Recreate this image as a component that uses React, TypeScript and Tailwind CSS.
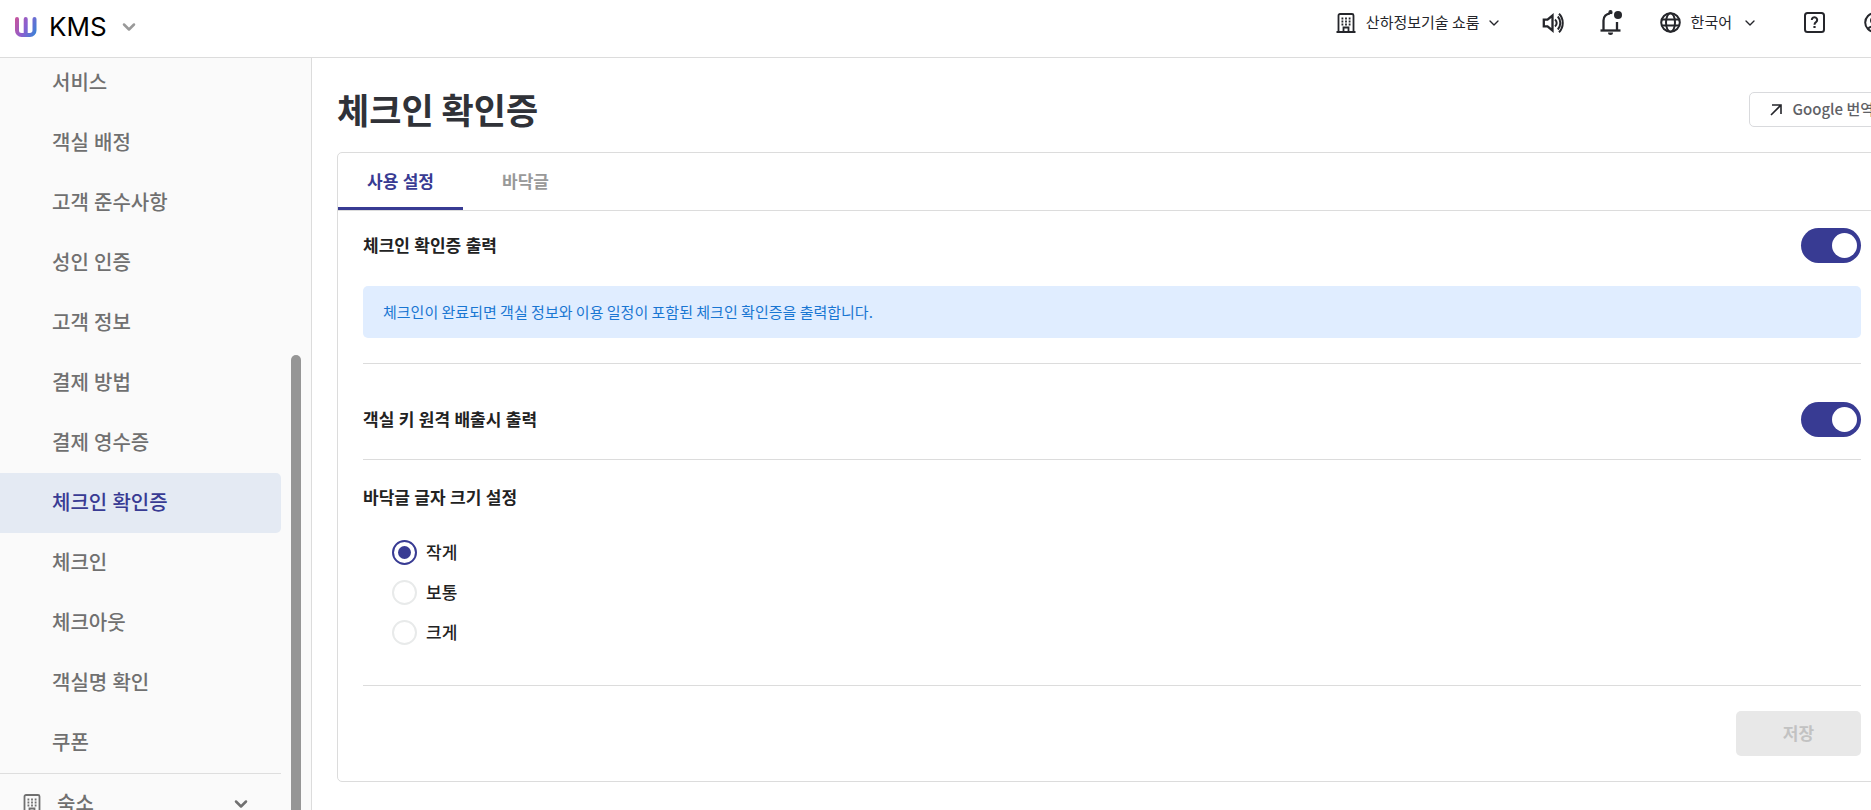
import { useState } from "react";
import type { ReactNode } from "react";
import { ChevronDown } from "lucide-react";

const MENU = [
  "서비스",
  "객실 배정",
  "고객 준수사항",
  "성인 인증",
  "고객 정보",
  "결제 방법",
  "결제 영수증",
  "체크인 확인증",
  "체크인",
  "체크아웃",
  "객실명 확인",
  "쿠폰",
];

const TABS = ["사용 설정", "바닥글"];
const SIZES = ["작게", "보통", "크게"];

function LogoMark() {
  return (
    <svg width="23" height="20" viewBox="0 0 23 20" fill="none" aria-hidden="true">
      <defs>
        <linearGradient id="mark" x1="0" y1="4" x2="23" y2="14" gradientUnits="userSpaceOnUse">
          <stop offset="0" stopColor="#c9549b" />
          <stop offset="0.5" stopColor="#8a5fd0" />
          <stop offset="1" stopColor="#3b82d6" />
        </linearGradient>
      </defs>
      <path
        d="M3 2v11.500a4.500 4.500 0 0 0 4.500 4.500H16a4.500 4.500 0 0 0 4.500-4.500V2M11.700 2v15.500"
        stroke="url(#mark)"
        strokeWidth="4"
        strokeLinecap="round"
      />
    </svg>
  );
}

function BuildingIcon({ size }: Readonly<{ size: number }>) {
  return (
    <svg width={size} height={size} viewBox="0 0 20 20" fill="none" stroke="currentColor" aria-hidden="true">
      <path d="M2.500 19V2.500a1.500 1.500 0 0 1 1.500-1.500h12a1.500 1.500 0 0 1 1.500 1.500V19" strokeWidth="1.800" />
      <path d="M0.500 19h19" strokeWidth="2" />
      <path d="M7.500 19v-4.500h5V19" strokeWidth="1.800" />
      <path d="M5.500 5.500h9M5.500 8.500h9M5.500 11.500h9" strokeWidth="1.800" strokeDasharray="1.800 1.800" />
    </svg>
  );
}

function VolumeIcon() {
  return (
    <svg width="22" height="22" viewBox="0 0 22 22" fill="none" stroke="currentColor" strokeWidth="2.300" aria-hidden="true">
      <path d="M1.800 7.600h3.700L10.500 3.500v15l-5-4.100H1.800z" />
      <path d="M13 7.500c2.200 1.800 2.200 5.200 0 7M15.800 4.500c3.300 3.600 3.300 9.400 0 13M17 1.800c5 4.800 5 13.600 0 18.400" strokeWidth="2" />
    </svg>
  );
}

function BellIcon() {
  return (
    <svg width="22" height="25" viewBox="0 0 22 25" fill="none" stroke="currentColor" aria-hidden="true">
      <path d="M0.500 20.500h20" strokeWidth="2.300" />
      <path d="M3.500 20V10.500c0-4 2.800-6.700 6.500-7.200M17 12v8.500" strokeWidth="2.300" />
      <path d="M9 4V2.200a1.500 1.500 0 0 1 3 0L11.500 4" strokeWidth="1.200" fill="currentColor" />
      <circle cx="18" cy="5" r="4" fill="currentColor" stroke="none" />
      <path d="M8 22.500h5a2.500 2.500 0 0 1-5 0z" fill="currentColor" stroke="none" />
    </svg>
  );
}

function GlobeIcon() {
  return (
    <svg width="21" height="21" viewBox="0 0 21 21" fill="none" stroke="currentColor" strokeWidth="2" aria-hidden="true">
      <circle cx="10.500" cy="10.500" r="9.300" />
      <ellipse cx="10.500" cy="10.500" rx="4.500" ry="9.300" />
      <path d="M1.800 7.500h17.400M1.800 13.500h17.400" />
    </svg>
  );
}

function HelpIcon() {
  return (
    <svg width="21" height="21" viewBox="0 0 21 21" fill="none" stroke="currentColor" strokeWidth="2" aria-hidden="true">
      <rect x="1" y="1" width="19" height="19" rx="2.500" />
      <path d="M7.800 8a2.700 2.700 0 1 1 4.200 2.200c-1 .7-1.500 1.200-1.500 2.500" />
      <path d="M10.500 14v2" strokeWidth="2.200" />
    </svg>
  );
}

function UserIcon() {
  return (
    <svg width="21" height="21" viewBox="0 0 21 21" fill="none" stroke="currentColor" strokeWidth="2" aria-hidden="true">
      <circle cx="10.500" cy="10.500" r="9.300" />
      <circle cx="10.500" cy="8.500" r="3.500" />
      <path d="M4 17c2-3.500 11-3.500 13 0" />
    </svg>
  );
}

function IconButton({ label, children }: Readonly<{ label: string; children: ReactNode }>) {
  return (
    <button type="button" aria-label={label} className="shrink-0">
      {children}
    </button>
  );
}

function Toggle({ id }: Readonly<{ id: string }>) {
  return (
    <input
      id={id}
      type="checkbox"
      role="switch"
      defaultChecked
      className="flex h-[35px] w-[60px] shrink-0 cursor-pointer appearance-none items-center rounded-full bg-gray-300 px-1 before:block before:size-[25px] before:rounded-full before:bg-white checked:justify-end checked:bg-[#383b93]"
    />
  );
}

function Header() {
  return (
    <header className="flex h-[58px] shrink-0 items-center justify-between overflow-hidden border-b border-[#dcdcdc] bg-white pl-[14px] font-['Noto_Sans_CJK_KR',sans-serif] text-[#25262b]">
      <button type="button" className="flex items-center gap-3 pb-1">
        <LogoMark />
        <span className="font-['Inter',sans-serif] text-[26px] leading-8 text-black">KMS</span>
        <ChevronDown size={20} strokeWidth={3} className="text-[#999]" />
      </button>
      <div className="-mr-[14px] flex shrink-0 items-center pb-3 text-[15px]">
        <button type="button" className="mr-10 flex items-center gap-[10px]">
          <BuildingIcon size={20} />
          <span className="-mr-1">산하정보기술 쇼룸</span>
          <ChevronDown size={16} strokeWidth={2} />
        </button>
        <div className="mr-[38px] flex items-center gap-9">
          <IconButton label="소리">
            <VolumeIcon />
          </IconButton>
          <IconButton label="알림">
            <BellIcon />
          </IconButton>
        </div>
        <button type="button" className="mr-[46px] flex items-center gap-[10px]">
          <GlobeIcon />
          <span>한국어</span>
          <ChevronDown size={16} strokeWidth={2} />
        </button>
        <div className="flex items-center gap-[39px]">
          <IconButton label="도움말">
            <HelpIcon />
          </IconButton>
          <IconButton label="계정">
            <UserIcon />
          </IconButton>
        </div>
      </div>
    </header>
  );
}

function Sidebar() {
  return (
    <aside className="flex w-[312px] shrink-0 overflow-hidden border-r border-[#dcdcdc] bg-[#fafafa] text-[20px] font-medium text-[#707070]">
      <nav className="-mt-[5px] flex-1">
        <ul className="border-b border-[#dedede]">
          {MENU.map((item) => {
            const active = item === "체크인 확인증";
            return (
              <li key={item}>
                <a
                  href="#"
                  aria-current={active ? "page" : undefined}
                  className={
                    active
                      ? "flex h-[60px] items-center rounded-r-[5px] bg-[#e4eaf3] pl-[52px] text-[#383b93]"
                      : "flex h-[60px] items-center pl-[52px]"
                  }
                >
                  {item}
                </a>
              </li>
            );
          })}
        </ul>
        <button type="button" className="flex h-[60px] w-full items-center pr-[30px] pl-[22px]">
          <BuildingIcon size={20} />
          <span className="ml-[15px] flex-1 text-left">숙소</span>
          <ChevronDown size={20} strokeWidth={3} />
        </button>
      </nav>
      {/* scrollbar thumb */}
      <div className="mt-[297px] mr-[10px] ml-[10px] w-[10px] shrink-0 rounded-t-full bg-[#969696]" />
    </aside>
  );
}

export default function App() {
  const [size, setSize] = useState(SIZES[0]);

  return (
    <div className="flex h-screen flex-col overflow-hidden bg-white font-['Noto_Sans','Noto_Sans_CJK_KR',sans-serif] text-[#25262b]">
      <Header />
      <div className="flex min-h-0 flex-1">
        <Sidebar />
        <main className="min-w-0 flex-1 overflow-hidden pl-[25px]">
          <div className="-mr-4">
            <div className="-mr-2 flex h-[94px] items-center justify-between pt-[9px] font-['Noto_Sans_CJK_KR',sans-serif]">
              <h1 className="text-[35px] font-bold text-[#303238]">체크인 확인증</h1>
              <a
                href="#"
                className="flex h-[35px] items-center gap-[10px] rounded-[5px] border border-[#d9dadd] px-5 text-[15px] font-medium text-[#606166]"
              >
                <svg width="12" height="12" viewBox="0 0 12 12" fill="none" stroke="#25262b" strokeWidth="1.600" aria-hidden="true">
                  <path d="M1 11 11 1M2 1h9v9" />
                </svg>
                Google 번역
              </a>
            </div>

            <section className="rounded-[5px] border border-[#dcdcdc]">
              <div role="tablist" className="flex h-[58px] border-b border-[#dcdcdc] text-[17px]">
                {TABS.map((tab, i) => (
                  <button
                    key={tab}
                    type="button"
                    role="tab"
                    aria-selected={i === 0}
                    className={
                      i === 0
                        ? "w-[125px] border-b-3 border-[#383b93] pt-1 font-bold text-[#383b93]"
                        : "w-[125px] border-b-3 border-transparent pt-1 font-bold text-[#999]"
                    }
                  >
                    {tab}
                  </button>
                ))}
              </div>

              <div className="px-[25px] text-[17px] text-[#222]">
                <div className="border-b border-[#dcdcdc] pt-[17px] pb-[25px]">
                  <div className="flex items-center justify-between">
                    <label htmlFor="print" className="font-bold">
                      체크인 확인증 출력
                    </label>
                    <Toggle id="print" />
                  </div>
                  <p className="mt-[23px] rounded-[5px] bg-[#e0edff] px-5 py-4 font-['Noto_Sans_CJK_KR',sans-serif] text-[15px] leading-5 text-[#1976d2]">
                    체크인이 완료되면 객실 정보와 이용 일정이 포함된 체크인 확인증을 출력합니다.
                  </p>
                </div>

                <div className="flex items-center justify-between border-b border-[#dcdcdc] pt-[38px] pb-[22px]">
                  <label htmlFor="remote" className="font-bold">
                    객실 키 원격 배출시 출력
                  </label>
                  <Toggle id="remote" />
                </div>

                <fieldset className="border-b border-[#dcdcdc] pb-10">
                  <legend className="pt-6 pb-7 leading-7 font-bold">바닥글 글자 크기 설정</legend>
                  <div className="flex flex-col items-start gap-[15px] pl-[29px]">
                    {SIZES.map((name) => (
                      <label key={name} className="flex h-[25px] items-center gap-[9px] font-medium">
                        <input
                          type="radio"
                          name="size"
                          checked={size === name}
                          onChange={() => setSize(name)}
                          className="flex size-[25px] appearance-none items-center justify-center rounded-full border-2 border-[#e8eaea] before:size-[13px] before:rounded-full checked:border-[#383b93] checked:before:bg-[#383b93]"
                        />
                        {name}
                      </label>
                    ))}
                  </div>
                </fieldset>

                <div className="flex justify-end py-[25px]">
                  <button
                    type="button"
                    disabled
                    className="h-[45px] w-[125px] rounded-[5px] bg-[#e8e8e8] font-bold text-[#c2c2c2]"
                  >
                    저장
                  </button>
                </div>
              </div>
            </section>
          </div>
        </main>
      </div>
    </div>
  );
}
